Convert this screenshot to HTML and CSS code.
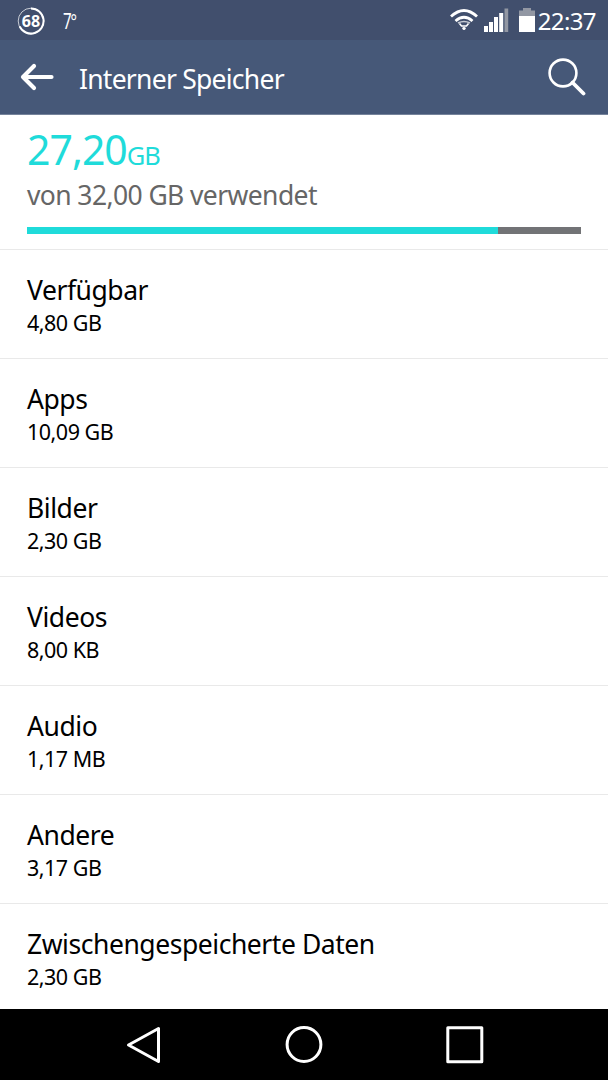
FILE: index.html
```
<!DOCTYPE html>
<html lang="de">
<head>
    <meta charset="UTF-8">
    <meta name="viewport" content="width=device-width, initial-scale=1.0">
    <title>Interner Speicher</title>
    <link rel="stylesheet" href="styles.css">
</head>
<body>
    <div class="screen">
        <div class="status-bar">
            <div class="battery-badge">
                <svg width="28" height="28" viewBox="0 0 28 28" fill="none" stroke="#fff">
                    <circle cx="14" cy="14" r="12.8" stroke-width="1" opacity="0.7"/>
                    <path d="M14 1.4A12.6 12.6 0 1 1 2.6 19.4" stroke-width="2"/>
                </svg>
                <span class="battery-level">68</span>
            </div>
            <span class="temperature">7°</span>
            <div class="status-icons">
                <svg class="wifi" width="28" height="22" viewBox="0 0 28 22" fill="none" stroke="#fff">
                    <path d="M1 7.5Q14 -4.5 27 7.5" stroke-width="2.8"/>
                    <path d="M5.5 12Q14 4.5 22.5 12" stroke-width="2.8"/>
                    <path d="M8 14Q14 11 20 14" stroke-width="1.5" opacity="0.7"/>
                    <path d="M9.5 14.5l2 2.5h5l2-2.5M12.5 19.2h3" stroke-width="1.6"/>
                    <circle cx="14" cy="19.5" r="1.5" fill="#fff" stroke="none"/>
                </svg>
                <svg class="signal" width="25" height="24" viewBox="0 0 25 24" fill="#fff">
                    <rect x="0" y="18" width="4" height="6"/>
                    <rect x="5" y="14" width="4" height="10"/>
                    <rect x="10" y="9" width="4" height="15"/>
                    <rect x="15.2" y="5" width="4" height="19"/>
                    <rect x="20.5" y="0.5" width="3.7" height="23.5" fill="#9297a3"/>
                </svg>
                <svg class="battery" width="16" height="24" viewBox="0 0 16 24">
                    <path d="M0 2.5h4V0h8v2.5h4V9H0z" fill="#9297a3"/>
                    <rect y="8" width="16" height="16" fill="#fff"/>
                </svg>
                <span class="clock">22:37</span>
            </div>
        </div>

        <header class="action-bar">
            <svg class="back" width="34" height="28" viewBox="0 0 34 28" fill="none" stroke="#fff" stroke-width="4.2" stroke-linecap="round" stroke-linejoin="round">
                <path d="M14 3L3 14l11 11M3 14h28.5"/>
            </svg>
            <h1>Interner Speicher</h1>
            <svg class="search" width="38" height="38" viewBox="0 0 38 38" fill="none" stroke="#fff">
                <circle cx="15" cy="15" r="13.4" stroke-width="2.6"/>
                <path d="M24.5 24.5L35.5 35.5" stroke-width="3.8" stroke-linecap="round"/>
            </svg>
        </header>

        <section class="summary">
            <div class="used">27,20<span class="unit">GB</span></div>
            <div class="total">von 32,00 GB verwendet</div>
            <div class="usage-bar"><div class="usage-fill" style="width: 85%"></div></div>
        </section>

        <ul class="storage-list">
            <li><div class="name">Verfügbar</div><div class="size">4,80 GB</div></li>
            <li><div class="name">Apps</div><div class="size">10,09 GB</div></li>
            <li><div class="name">Bilder</div><div class="size">2,30 GB</div></li>
            <li><div class="name">Videos</div><div class="size">8,00 KB</div></li>
            <li><div class="name">Audio</div><div class="size">1,17 MB</div></li>
            <li><div class="name">Andere</div><div class="size">3,17 GB</div></li>
            <li><div class="name">Zwischengespeicherte Daten</div><div class="size">2,30 GB</div></li>
        </ul>

        <nav class="nav-bar">
            <svg width="38" height="38" viewBox="0 0 38 38"><path d="M34.5 2.5v33L4.500 19z"/></svg>
            <svg width="38" height="38" viewBox="0 0 38 38"><circle cx="19" cy="18.5" r="16.9"/></svg>
            <svg width="38" height="38" viewBox="0 0 38 38"><rect x="1.8" y="1.8" width="34" height="34"/></svg>
        </nav>
    </div>
</body>
</html>
```
FILE: styles.css
```
* {
    box-sizing: border-box;
}
body {
    margin: 0;
    font-family: "Noto Sans", sans-serif;
    background: #fff;
    color: #000;
}
svg {
    display: block;
    flex: none;
}
.screen {
    display: flex;
    flex-direction: column;
    height: 1080px;
    overflow: hidden;
}
.status-bar {
    display: flex;
    align-items: center;
    flex: none;
    height: 40px;
    padding: 0 12px 0 17px;
    background: #414f6d;
    color: #fff;
}
.battery-badge {
    display: grid;
    place-items: center;
    margin-top: 1px;
}
.battery-badge > * {
    grid-area: 1 / 1;
}
.battery-level {
    font-size: 16px;
    font-weight: 700;
    line-height: 28px;
}
.temperature {
    margin: 2px 0 0 18px;
    font-size: 21px;
    letter-spacing: -1.5px;
    transform: scaleX(0.72);
    transform-origin: left;
}
.status-icons {
    display: flex;
    align-items: center;
    margin-left: auto;
}
.signal {
    margin-left: 6px;
}
.battery {
    margin-left: 10px;
}
.clock {
    margin: 1px 0 0 3px;
    font-size: 24px;
    line-height: 38px;
    letter-spacing: -0.6px;
}
.action-bar {
    display: flex;
    align-items: center;
    flex: none;
    height: 75px;
    padding: 0 22px 0 20px;
    background: #465878;
    border-bottom: 1px solid #75839b;
    color: #fff;
}
.action-bar h1 {
    margin: 3px 0 0 25px;
    font-size: 26.5px;
    font-weight: 400;
    line-height: 36px;
    letter-spacing: -0.75px;
}
.search {
    margin-left: auto;
}
.summary {
    flex: none;
    height: 135px;
    padding: 10px 27px 0;
    border-bottom: 1px solid #e9e9e9;
}
.used {
    color: #1fdbda;
    font-size: 41px;
    line-height: 48px;
    letter-spacing: -1px;
}
.unit {
    font-size: 25.5px;
    line-height: 1;
}
.total {
    margin-top: 4px;
    color: #666;
    font-size: 26.5px;
    line-height: 36px;
    letter-spacing: -0.6px;
}
.usage-bar {
    height: 7px;
    margin-top: 14px;
    background: #727376;
}
.usage-fill {
    height: 100%;
    background: #1fdbda;
}
.storage-list {
    flex: 1;
    min-height: 0;
    margin: 0;
    padding: 0;
    overflow: hidden;
    list-style: none;
}
.storage-list li {
    height: 109px;
    padding: 23px 27px 0;
    border-bottom: 1px solid #e9e9e9;
}
.name {
    font-size: 26.5px;
    line-height: 34px;
    letter-spacing: -0.45px;
}
.size {
    font-size: 21.5px;
    line-height: 31px;
    letter-spacing: -0.5px;
}
.nav-bar {
    display: flex;
    justify-content: center;
    align-items: center;
    flex: none;
    gap: 123px;
    height: 71px;
    background: #000;
}
.nav-bar svg {
    fill: none;
    stroke: #fff;
    stroke-width: 3px;
    stroke-linejoin: round;
}
```
